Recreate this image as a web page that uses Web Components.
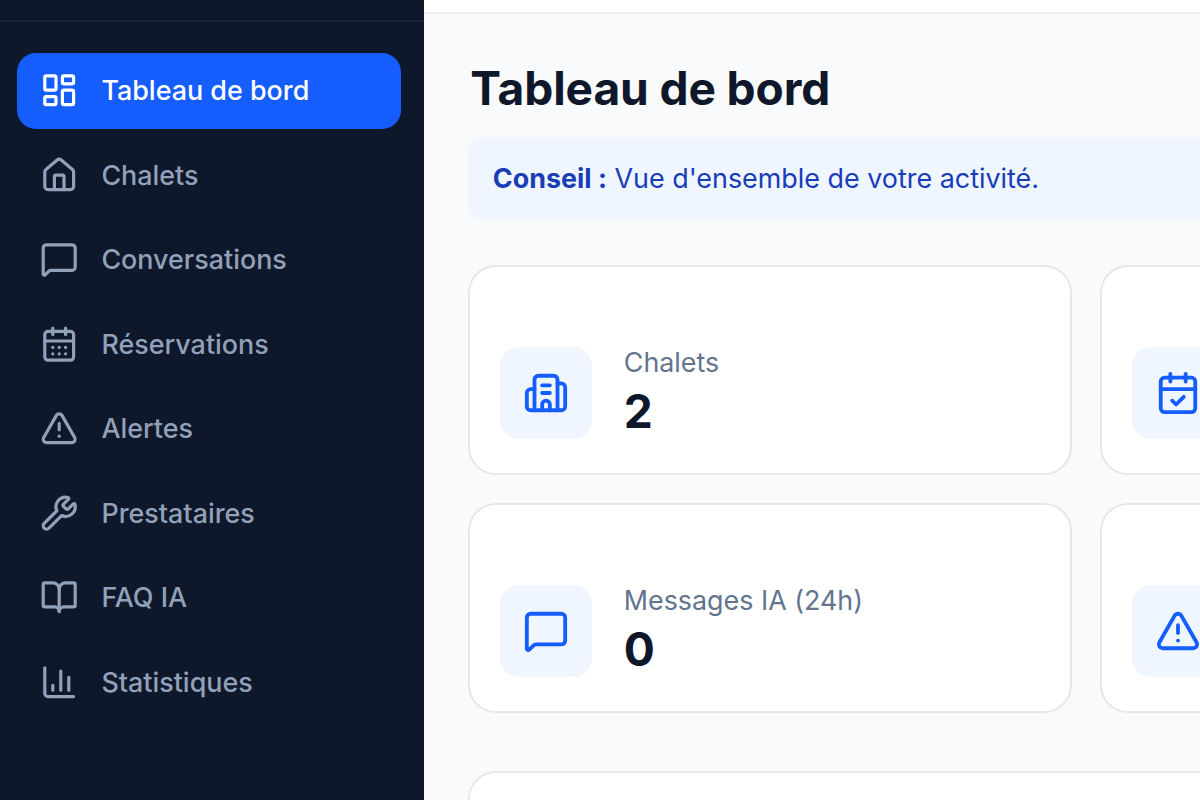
<!DOCTYPE html>
<html lang="fr">
<head>
<meta charset="utf-8">
<title>Tableau de bord</title>
<style>
  body {
    margin: 0;
    width: 1200px;
    height: 800px;
    overflow: hidden;
    font-family: Inter, "Liberation Sans", sans-serif;
    font-size: 27px;
  }
</style>
</head>
<body>
<dashboard-shell>
  <side-nav slot="nav">
    <nav-item icon="dashboard" active>Tableau de bord</nav-item>
    <nav-item icon="house">Chalets</nav-item>
    <nav-item icon="message">Conversations</nav-item>
    <nav-item icon="calendar">Réservations</nav-item>
    <nav-item icon="alert">Alertes</nav-item>
    <nav-item icon="wrench">Prestataires</nav-item>
    <nav-item icon="book">FAQ IA</nav-item>
    <nav-item icon="chart">Statistiques</nav-item>
  </side-nav>
  <page-title>Tableau de bord</page-title>
  <tip-banner label="Conseil :">Vue d'ensemble de votre activité.</tip-banner>
  <stat-grid>
    <stat-card icon="building" value="2">Chalets</stat-card>
    <stat-card icon="calendar-check"></stat-card>
    <stat-card icon="message" value="0">Messages IA (24h)</stat-card>
    <stat-card icon="alert"></stat-card>
  </stat-grid>
  <content-panel></content-panel>
</dashboard-shell>

<script>
"use strict";

// ICONS (24x24, stroked)
const icons = {
  dashboard: `<rect width="7" height="9" x="3" y="3" rx="1"/><rect width="7" height="5" x="14" y="3" rx="1"/><rect width="7" height="9" x="14" y="12" rx="1"/><rect width="7" height="5" x="3" y="16" rx="1"/>`,
  house: `<path d="M15 21v-8a1 1 0 0 0-1-1h-4a1 1 0 0 0-1 1v8"/><path d="M3 10a2 2 0 0 1 .709-1.528l7-5.999a2 2 0 0 1 2.582 0l7 5.999A2 2 0 0 1 21 10v9a2 2 0 0 1-2 2H5a2 2 0 0 1-2-2z"/>`,
  message: `<path d="M22 17a2 2 0 0 1-2 2H6.828a2 2 0 0 0-1.414.586l-2.202 2.202A.71.71 0 0 1 2 21.286V5a2 2 0 0 1 2-2h16a2 2 0 0 1 2 2z"/>`,
  calendar: `<path d="M8 2v4"/><path d="M16 2v4"/><rect width="18" height="18" x="3" y="4" rx="2"/><path d="M3 10h18"/><path d="M8 14h.01"/><path d="M12 14h.01"/><path d="M16 14h.01"/><path d="M8 18h.01"/><path d="M12 18h.01"/><path d="M16 18h.01"/>`,
  "calendar-check": `<path d="M8 2v4"/><path d="M16 2v4"/><rect width="18" height="18" x="3" y="4" rx="2"/><path d="M3 10h18"/><path d="m9 16 2 2 4-4"/>`,
  alert: `<path d="m21.73 18-8-14a2 2 0 0 0-3.48 0l-8 14A2 2 0 0 0 4 21h16a2 2 0 0 0 1.73-3"/><path d="M12 9v4"/><path d="M12 17h.01"/>`,
  wrench: `<path d="M14.7 6.3a1 1 0 0 0 0 1.4l1.6 1.6a1 1 0 0 0 1.4 0l3.106-3.105c.32-.322.863-.22.983.218a6 6 0 0 1-8.259 7.057l-7.91 7.91a1 1 0 0 1-2.999-3l7.91-7.91a6 6 0 0 1 7.057-8.259c.438.12.54.662.219.984z"/>`,
  book: `<path d="M12 7v14"/><path d="M3 18a1 1 0 0 1-1-1V4a1 1 0 0 1 1-1h5a4 4 0 0 1 4 4 4 4 0 0 1 4-4h5a1 1 0 0 1 1 1v13a1 1 0 0 1-1 1h-6a3 3 0 0 0-3 3 3 3 0 0 0-3-3z"/>`,
  chart: `<path d="M3 3v16a2 2 0 0 0 2 2h16"/><path d="M18 17V9"/><path d="M13 17V5"/><path d="M8 17v-3"/>`,
  building: `<path d="M10 12h4"/><path d="M10 8h4"/><path d="M14 21v-3a2 2 0 0 0-4 0v3"/><path d="M6 10H4a2 2 0 0 0-2 2v7a2 2 0 0 0 2 2h16a2 2 0 0 0 2-2V9a2 2 0 0 0-2-2h-2"/><path d="M6 21V5a2 2 0 0 1 2-2h8a2 2 0 0 1 2 2v16"/>`,
};

// COMPONENTS

// || ICON ||
class UiIcon extends HTMLElement {
  constructor() {
    super();
    const shadow = this.attachShadow({ mode: "open" });
    shadow.innerHTML = `
    <style>
      :host {
        display: block;
        flex: none;
        width: 38.4px;
        height: 38.4px;
      }

      svg {
        display: block;
        width: 100%;
        height: 100%;
        fill: none;
        stroke: currentColor;
        stroke-width: 2;
        stroke-linecap: round;
        stroke-linejoin: round;
      }
    </style>
    <svg viewBox="0 0 24 24">${icons[this.getAttribute("name")] || ""}</svg>
    `;
  }
}

// || SHELL ||
class DashboardShell extends HTMLElement {
  constructor() {
    super();
    const shadow = this.attachShadow({ mode: "open" });
    shadow.innerHTML = `
    <style>
      :host {
        display: grid;
        grid-template-columns: 424px 1fr;
        height: 800px;
        background: #f9fafb;
        color: #0f172b;
      }

      .page {
        min-width: 0;
        overflow: hidden;
      }

      .topbar {
        height: 12px;
        background: #fff;
        border-bottom: 2px solid #f0f1f4;
      }

      /* wider than the window, the right side is cut off */
      main {
        width: 1236px;
        padding: 43px 0 0 44.3px;
      }
    </style>
    <slot name="nav"></slot>
    <div class="page">
      <div class="topbar"></div>
      <main><slot></slot></main>
    </div>
    `;
  }
}

// || SIDE NAV ||
class SideNav extends HTMLElement {
  constructor() {
    super();
    const shadow = this.attachShadow({ mode: "open" });
    shadow.innerHTML = `
    <style>
      :host {
        display: block;
        background: #0f172a;
      }

      .brand {
        height: 20px;
        border-bottom: 2px solid #1a2335;
      }

      nav {
        display: flex;
        flex-direction: column;
        gap: 8.5px;
        padding: 30.7px 23px 0 17px;
      }
    </style>
    <div class="brand"></div>
    <nav><slot></slot></nav>
    `;
  }
}

// || NAV ITEM ||
class NavItem extends HTMLElement {
  constructor() {
    super();
    const shadow = this.attachShadow({ mode: "open" });
    shadow.innerHTML = `
    <style>
      :host {
        display: flex;
        align-items: center;
        gap: 22.6px;
        height: 76px;
        box-sizing: border-box;
        padding: 0 23.4px;
        border-radius: 19px;
        color: #90a1b9;
        font-size: 26.9px;
        font-weight: 500;
        white-space: nowrap;
      }

      :host([active]) {
        background: #155dfc;
        color: #fff;
      }

      span {
        padding-bottom: 0.8px;
      }
    </style>
    <ui-icon name="${this.getAttribute("icon")}"></ui-icon>
    <span><slot></slot></span>
    `;
  }
}

// || PAGE TITLE ||
class PageTitle extends HTMLElement {
  constructor() {
    super();
    const shadow = this.attachShadow({ mode: "open" });
    shadow.innerHTML = `
    <style>
      :host {
        display: block;
      }

      h1 {
        margin: 0;
        padding-left: 2px;
        font-size: 46.1px;
        font-weight: 700;
        line-height: 62px;
        letter-spacing: -0.1px;
      }
    </style>
    <h1><slot></slot></h1>
    `;
  }
}

// || TIP BANNER ||
class TipBanner extends HTMLElement {
  constructor() {
    super();
    const shadow = this.attachShadow({ mode: "open" });
    shadow.innerHTML = `
    <style>
      :host {
        display: block;
        margin-top: 17.5px;
        padding: 0 24.5px;
        border-radius: 15px;
        background: #eff6ff;
        color: #193cb8;
        font-size: 26.9px;
        line-height: 83.5px;
        white-space: nowrap;
      }

      strong {
        font-weight: 700;
      }
    </style>
    <strong>${this.getAttribute("label")}</strong> <slot></slot>
    `;
  }
}

// || STAT GRID ||
class StatGrid extends HTMLElement {
  constructor() {
    super();
    const shadow = this.attachShadow({ mode: "open" });
    shadow.innerHTML = `
    <style>
      :host {
        display: grid;
        grid-template-columns: 1fr 1fr;
        gap: 28px;
        margin-top: 45px;
      }
    </style>
    <slot></slot>
    `;
  }
}

// || STAT CARD ||
class StatCard extends HTMLElement {
  constructor() {
    super();
    const shadow = this.attachShadow({ mode: "open" });
    shadow.innerHTML = `
    <style>
      :host {
        display: flex;
        align-items: flex-end;
        gap: 31.5px;
        height: 210px;
        box-sizing: border-box;
        padding: 0 30px 34px;
        border: 2px solid #e5e7eb;
        border-radius: 28px;
        background: #fff;
      }

      .tile {
        display: flex;
        align-items: center;
        justify-content: center;
        width: 92px;
        height: 92px;
        border-radius: 19px;
        background: #eff6ff;
        color: #155dfc;
      }

      ui-icon {
        width: 46px;
        height: 46px;
      }

      .label {
        color: #62748e;
        font-size: 26.85px;
        line-height: 38px;
        white-space: nowrap;
      }

      .value {
        height: 58px;
        font-size: 46.1px;
        font-weight: 700;
        line-height: 61px;
      }
    </style>
    <div class="tile"><ui-icon name="${this.getAttribute("icon")}"></ui-icon></div>
    <div>
      <div class="label"><slot></slot></div>
      <div class="value">${this.getAttribute("value") || ""}</div>
    </div>
    `;
  }
}

// || CONTENT PANEL ||
class ContentPanel extends HTMLElement {
  constructor() {
    super();
    const shadow = this.attachShadow({ mode: "open" });
    shadow.innerHTML = `
    <style>
      :host {
        display: block;
        height: 400px;
        box-sizing: border-box;
        margin-top: 58px;
        border: 2px solid #e5e7eb;
        border-radius: 28px;
        background: #fff;
      }
    </style>
    <slot></slot>
    `;
  }
}

customElements.define("ui-icon", UiIcon);
customElements.define("dashboard-shell", DashboardShell);
customElements.define("side-nav", SideNav);
customElements.define("nav-item", NavItem);
customElements.define("page-title", PageTitle);
customElements.define("tip-banner", TipBanner);
customElements.define("stat-grid", StatGrid);
customElements.define("stat-card", StatCard);
customElements.define("content-panel", ContentPanel);
</script>
</body>
</html>
